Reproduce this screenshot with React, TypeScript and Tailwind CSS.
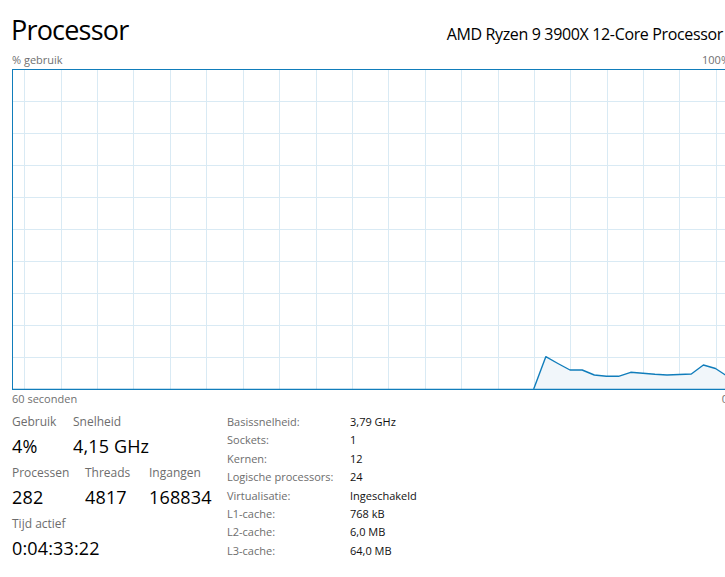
import React from 'react';

// CPU usage samples (chart pixel coords, relative to the chart's top-left)
const usage: [number, number][] = [
  [521.7, 320],
  [533.8, 287.7],
  [545.9, 294.5],
  [558, 301],
  [570.2, 301],
  [582.3, 306],
  [594.4, 307.3],
  [606.5, 307.3],
  [618.7, 303.3],
  [630.8, 304.3],
  [642.9, 305.3],
  [655, 306],
  [667.2, 305.5],
  [679.3, 305],
  [691.4, 296],
  [703.5, 299.5],
  [715.6, 307.5],
];

const stats = [
  [
    { label: 'Gebruik', value: '4%', w: 'w-[61px]' },
    { label: 'Snelheid', value: '4,15 GHz', w: '' },
  ],
  [
    { label: 'Processen', value: '282', w: 'w-[73px]' },
    { label: 'Threads', value: '4817', w: 'w-[64px]' },
    { label: 'Ingangen', value: '168834', w: '' },
  ],
  [{ label: 'Tijd actief', value: '0:04:33:22', w: '' }],
];

const info = [
  ['Basissnelheid:', '3,79 GHz'],
  ['Sockets:', '1'],
  ['Kernen:', '12'],
  ['Logische processors:', '24'],
  ['Virtualisatie:', 'Ingeschakeld'],
  ['L1-cache:', '768 kB'],
  ['L2-cache:', '6,0 MB'],
  ['L3-cache:', '64,0 MB'],
];

function UsageChart() {
  const W = 718;
  const H = 321;
  const line = usage.map(([x, y]) => `${x},${y}`).join(' ');
  const area = `${usage[0][0]},320 ${line} ${W},${usage[usage.length - 1][1]} ${W},320`;

  return (
    <svg width={W} height={H} viewBox={`0 0 ${W} ${H}`} className="block">
      {/* grid */}
      {Array.from({ length: 20 }, (_, k) => {
        const x = Math.round(12.3 + 36.4 * k) + 0.5;
        return <line key={'v' + k} x1={x} y1={0} x2={x} y2={320} stroke="#d9eaf4" strokeWidth={1} />;
      })}
      {Array.from({ length: 9 }, (_, k) => {
        const y = 32 * (k + 1) + 0.5;
        return <line key={'h' + k} x1={0} y1={y} x2={W} y2={y} stroke="#d9eaf4" strokeWidth={1} />;
      })}
      {/* usage */}
      <polygon points={area} fill="#f1f6fa" />
      <polyline points={line + ` ${W},${usage[usage.length - 1][1] + 2}`} fill="none" stroke="#117dbb" strokeWidth={1.4} strokeLinejoin="round" />
      {/* border */}
      <rect x={0.5} y={0.5} width={W + 10} height={320} fill="none" stroke="#117dbb" strokeWidth={1} />
      <line x1={0} y1={320.5} x2={W} y2={320.5} stroke="#117dbb" strokeWidth={1.5} />
    </svg>
  );
}

export default function App() {
  return (
    <div className="w-[725px] h-[577px] overflow-hidden bg-white text-black font-['Open_Sans','Noto_Sans',sans-serif]">
      <div className="w-[730px] pl-[12px]">
        {/* header */}
        <div className="h-[48px] flex items-baseline justify-between pt-[12px] leading-[36px]">
          <h1 className="text-[27px] font-normal -ml-[1px] tracking-[-0.8px]">Processor</h1>
          <span className="text-[16px] mr-[7px] tracking-[-0.35px]">AMD Ryzen 9 3900X 12-Core Processor</span>
        </div>

        <div className="mt-[5px] flex justify-between text-[11px] leading-[14px] text-[#707070]">
          <span>% gebruik</span>
          <span>100%</span>
        </div>

        <div className="mt-[2px]">
          <UsageChart />
        </div>

        <div className="pt-[1px] flex justify-between text-[11px] leading-[16px] text-[#707070]">
          <span>60 seconden</span>
          <span className="mr-[2px]">0</span>
        </div>

        {/* details */}
        <div className="mt-[7px] flex">
          <div className="w-[215px] flex flex-col gap-[7px]">
            {stats.map((row, i) => (
              <div key={i} className="flex">
                {row.map((s) => (
                  <div key={s.label} className={s.w}>
                    <div className="text-[12px] leading-[16px] text-[#6d6d6d]">{s.label}</div>
                    <div className="mt-[4px] text-[18px] leading-[24px] tracking-[0.15px]">{s.value}</div>
                  </div>
                ))}
              </div>
            ))}
          </div>

          <div className="-mt-[1px] grid grid-cols-[123px_auto] text-[11px] leading-[18px]">
            {info.map(([k, v]) => (
              <React.Fragment key={k}>
                <span className="text-[#6d6d6d]">{k}</span>
                <span className="text-[#111]">{v}</span>
              </React.Fragment>
            ))}
          </div>
        </div>
      </div>
    </div>
  );
}
